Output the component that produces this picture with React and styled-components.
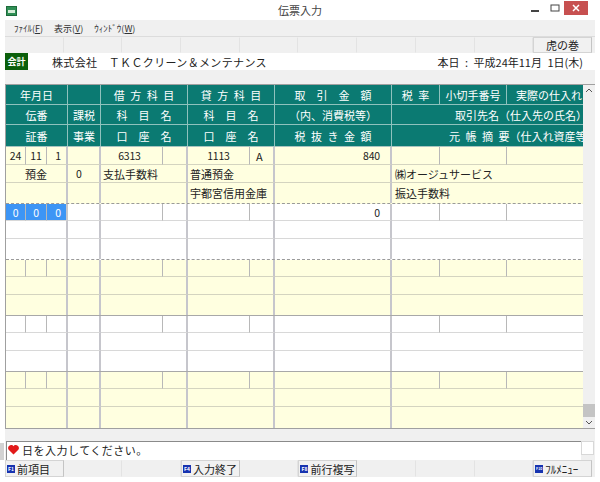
import React from 'react'
import styled, { createGlobalStyle } from 'styled-components'

const COLS = '20px 21px 21px 33px 62px 25px 62px 25px 117px 48px 67px 100px'
const FONT = `'Noto Sans CJK JP', 'Liberation Sans', sans-serif`
const EN = '\u2002'

const GlobalStyle = createGlobalStyle`
  html, body { margin: 0; padding: 0; background: #fff; }
  body { font-family: ${FONT}; color: #222; }
`

const Page = styled.div`
  width: 600px;
  height: 482px;
  overflow: hidden;
  position: relative;
  display: flex;
  flex-direction: column;
  background: #fff;
`

const EdgeShade = styled.div`
  position: absolute;
  left: 0;
  top: 443px;
  width: 4px;
  height: 17px;
  background: #d2d2d2;
`

const TitleBar = styled.div`
  height: 20px;
  position: relative;
  display: flex;
  align-items: center;
  justify-content: center;
  font-size: 11px;
  color: #444;
`

const AppIcon = styled.div`
  position: absolute;
  left: 6px;
  top: 6px;
  width: 11px;
  height: 10px;
  background: #2f8f55;
  border: 1px solid #1d6b3b;
  box-sizing: border-box;
  display: flex;
  align-items: center;
  justify-content: center;

  &::after {
    content: '';
    width: 7px;
    height: 3px;
    background: #d6ecd8;
  }
`

const WindowButtons = styled.div`
  position: absolute;
  right: 12px;
  top: 1px;
  display: flex;
  align-items: center;
`

const MinMax = styled.div`
  width: 19px;
  height: 14px;
  display: flex;
  align-items: center;
  justify-content: center;
`

const CloseBtn = styled.div`
  width: 24px;
  height: 14px;
  background: #c75050;
  display: flex;
  align-items: center;
  justify-content: center;
`

const Body = styled.div`
  margin: 0 5px;
  background: #f0f0f0;
  display: flex;
  flex-direction: column;
  height: 457px;
`

const MenuBar = styled.div`
  height: 16px;
  display: flex;
  align-items: center;
  gap: 11px;
  padding-left: 9px;
  font-size: 9px;
  color: #333;
  u { text-decoration: underline; }
`

const SlotRow = styled.div`
  height: 17px;
  display: grid;
  grid-template-columns: repeat(10, 58.7px);
  box-sizing: border-box;
  border-top: ${p => (p.$top ? '1px solid #dcdcdc' : 'none')};
`

const FuncButton = styled.div`
  box-sizing: border-box;
  background: ${p => (p.$on ? '#f1f1f1' : 'transparent')};
  border: 1px solid ${p => (p.$on ? '#d4d4d4' : 'transparent')};
  border-right-color: ${p => (p.$on ? '#c4c4c4' : '#e3e3e3')};
  display: flex;
  align-items: center;
  justify-content: ${p => (p.$center ? 'center' : 'flex-start')};
  gap: 1px;
  font-size: 11px;
  color: #222;
  white-space: nowrap;
  overflow: hidden;
`

const CompanyRow = styled.div`
  height: 17px;
  background: #fff;
  display: flex;
  align-items: center;
  font-size: 11px;
  color: #222;
`

const Badge = styled.div`
  width: 23px;
  height: 17px;
  background: #0b5f0b;
  color: #fff;
  font-weight: 700;
  font-size: 9px;
  display: flex;
  align-items: center;
  justify-content: center;
`

const CompanyName = styled.div`
  margin-left: 24px;
  letter-spacing: 0.35px;
  flex: 1;
  white-space: pre;
`

const Today = styled.div`
  padding-right: 12px;
  white-space: pre;
`

const TableArea = styled.div`
  margin-top: 14px;
  height: 345px;
  display: flex;
  border-top: 1px solid #a0a0a0;
  border-bottom: 1px solid #a0a0a0;
  border-left: 1px solid #a0a0a0;
  box-sizing: border-box;
`

const Sheet = styled.div`
  width: 577px;
  overflow: hidden;
  display: flex;
  flex-direction: column;
  flex: none;
`

const HeaderGrid = styled.div`
  display: grid;
  width: 600px;
  grid-template-columns: ${COLS};
  grid-template-rows: 20px 20px 21px;
  background: #0b7a72;
  border-bottom: 1px solid #a8c4c0;
`

const HeadCell = styled.div`
  grid-column: span ${p => p.$span || 1};
  box-sizing: border-box;
  border-right: 1px solid #8fc2bd;
  border-bottom: ${p => (p.$last ? 'none' : '1px solid #8fc2bd')};
  color: #fff;
  font-size: 11px;
  display: flex;
  align-items: center;
  justify-content: ${p => (p.$pl ? 'flex-start' : 'center')};
  white-space: pre;
  overflow: hidden;
  padding-left: ${p => p.$pl || 0}px;
`

const Block = styled.div`
  display: grid;
  width: 600px;
  grid-template-columns: ${COLS};
  grid-template-rows: ${p => p.$rows};
  background: ${p => (p.$cream ? '#ffffe0' : '#fff')};
  border-bottom: 1px ${p => (p.$dash ? 'dashed #9a9a9a' : 'solid #a8a8a8')};
`

const Cell = styled.div`
  grid-column: span ${p => p.$span || 1};
  box-sizing: border-box;
  border-right: ${p => (p.$major ? '2px solid #c6c6cc' : '1px solid #b8b8b8')};
  border-bottom: ${p => (p.$end ? 'none' : `1px solid ${p.$cream ? '#d4d4c0' : '#d8d8d8'}`)};
  font-size: 11px;
  color: #222;
  display: flex;
  align-items: center;
  justify-content: ${p => p.$align || 'flex-start'};
  padding: 0 ${p => p.$pr || 0}px 0 ${p => p.$pl || 0}px;
  white-space: pre;
  overflow: hidden;
  ${p => p.$num && 'font-size: 10.5px; letter-spacing: -0.2px;'}
  ${p => p.$selected && 'background: #3d95f5; color: #fff;'}
`

const ScrollBar = styled.div`
  width: 12px;
  background: #f0f0f0;
  display: flex;
  flex-direction: column;
  align-items: center;
  justify-content: space-between;
  flex: none;
  position: relative;
`

const ScrollArrow = styled.div`
  height: 11px;
  display: flex;
  align-items: center;
  justify-content: center;
`

const ScrollThumb = styled.div`
  position: absolute;
  left: 0;
  right: 0;
  bottom: 11px;
  height: 13px;
  background: #c4c4c4;
`

const MessageRow = styled.div`
  margin-top: 12px;
  height: 19px;
  display: flex;
  padding-left: 1px;
`

const MessageBox = styled.div`
  width: 575px;
  box-sizing: border-box;
  background: #fff;
  border-top: 1px solid #8a8a8a;
  border-left: 1px solid #8a8a8a;
  display: flex;
  align-items: center;
  gap: 3px;
  font-size: 11px;
  letter-spacing: 0.5px;
  padding: 0 0 2px 1px;
`

const MessageSide = styled.div`
  width: 13px;
  height: 14px;
  box-sizing: border-box;
  background: #fff;
  border: 1px solid #d8d8d8;
`

const KeyIcon = styled.span`
  width: 8px;
  height: 8px;
  margin: 0 1px;
  background: #1733b0;
  color: #fff;
  font-size: ${p => (p.$tiny ? 3.5 : 5)}px;
  font-weight: 700;
  line-height: 8px;
  text-align: center;
  overflow: hidden;
  flex: none;
`

const Heart = () => (
  <svg width="11" height="10" viewBox="0 0 24 24" preserveAspectRatio="none">
    <path fill="#e21a1a" d="M12 23 1.500 11.500C-2 6 2 0 7 0c2.500 0 4 1.300 5 3 1-1.700 2.500-3 5-3 5 0 9 6 5.500 11.500z" />
  </svg>
)

const FUNC_KEYS = [
  { key: 'F1', label: '前項目' },
  {},
  {},
  { key: 'F4', label: '入力終了' },
  {},
  { key: 'F8', label: '前行複写' },
  {},
  {},
  {},
  { key: 'F10', label: 'ﾌﾙﾒﾆｭｰ' }
]

const BLOCKS = [
  {
    rows: '18px 18px 20px', cream: true, dash: true,
    y: '24', m: '11', d: '1', code: '6313', kind: '1113', tag: 'A', amount: '840',
    col1: '預金', tax: '0', debit: '支払手数料', credit: '普通預金',
    partner: '㈱オージュサービス', bank: '宇都宮信用金庫', memo: '振込手数料'
  },
  { rows: '17px 18px 20px', dash: true, selected: true, y: '0', m: '0', d: '0', amount: '0' },
  { rows: '17px 18px 20px', cream: true },
  { rows: '17px 18px 20px' },
  { rows: '17px 18px 21px', cream: true }
]

const Entry = ({ b }) => {
  const c = b.cream
  return (
    <Block $cream={c} $dash={b.dash} $rows={b.rows}>
      <Cell $cream={c} $num $align="center" $selected={b.selected}>{b.y}</Cell>
      <Cell $cream={c} $num $align="center" $selected={b.selected}>{b.m}</Cell>
      <Cell $cream={c} $num $major $align="flex-end" $pr={5} $selected={b.selected}>{b.d}</Cell>
      <Cell $cream={c} $major />
      <Cell $cream={c} $num $align="center" $pr={4}>{b.code}</Cell>
      <Cell $cream={c} $major />
      <Cell $cream={c} $num $align="center">{b.kind}</Cell>
      <Cell $cream={c} $major $pl={6}>{b.tag}</Cell>
      <Cell $cream={c} $num $major $align="flex-end" $pr={10}>{b.amount}</Cell>
      <Cell $cream={c} />
      <Cell $cream={c} />
      <Cell $cream={c} />

      <Cell $cream={c} $span={3} $major $align="center">{b.col1}</Cell>
      <Cell $cream={c} $major $num $pl={8}>{b.tax}</Cell>
      <Cell $cream={c} $span={2} $major $pl={2}>{b.debit}</Cell>
      <Cell $cream={c} $span={2} $major $pl={2}>{b.credit}</Cell>
      <Cell $cream={c} $major />
      <Cell $cream={c} $span={3} $pl={3}>{b.partner}</Cell>

      <Cell $end $span={3} $major />
      <Cell $end $major />
      <Cell $end $span={2} $major />
      <Cell $end $span={2} $major $pl={2}>{b.bank}</Cell>
      <Cell $end $major />
      <Cell $end $span={3} $pl={3}>{b.memo}</Cell>
    </Block>
  )
}

export default function App() {
  return (
    <Page>
      <GlobalStyle />
      <EdgeShade />
      <TitleBar>
        <AppIcon />
        伝票入力
        <WindowButtons>
          <MinMax>
            <svg width="9" height="8" viewBox="0 0 9 8"><rect x="0" y="6" width="8" height="2" fill="#444" /></svg>
          </MinMax>
          <MinMax>
            <svg width="10" height="8" viewBox="0 0 10 8"><rect x="1" y="1" width="8" height="6" fill="none" stroke="#444" strokeWidth="1" /></svg>
          </MinMax>
          <CloseBtn>
            <svg width="8" height="8" viewBox="0 0 8 8"><path d="M1 1 7 7M7 1 1 7" stroke="#fff" strokeWidth="1.5" /></svg>
          </CloseBtn>
        </WindowButtons>
      </TitleBar>
      <Body>
        <MenuBar>
          <span>ﾌｧｲﾙ(<u>F</u>)</span>
          <span>表示(<u>V</u>)</span>
          <span>ｳｨﾝﾄﾞｳ(<u>W</u>)</span>
        </MenuBar>
        <SlotRow $top>
          {Array.from({ length: 9 }, (_, i) => <FuncButton key={i} />)}
          <FuncButton $on $center>虎の巻</FuncButton>
        </SlotRow>
        <CompanyRow>
          <Badge>会計</Badge>
          <CompanyName>株式会社　ＴＫＣクリーン＆メンテナンス</CompanyName>
          <Today>{`本日${EN}:${EN}平成24年11月${EN}1日(木)`}</Today>
        </CompanyRow>
        <TableArea>
          <Sheet>
            <HeaderGrid>
              <HeadCell $span={3}>年月日</HeadCell>
              <HeadCell />
              <HeadCell $span={2}>{`借${EN}方${EN}科${EN}目`}</HeadCell>
              <HeadCell $span={2}>{`貸${EN}方${EN}科${EN}目`}</HeadCell>
              <HeadCell>取　引　金　額</HeadCell>
              <HeadCell>{`税${EN}率`}</HeadCell>
              <HeadCell>小切手番号</HeadCell>
              <HeadCell $pl={9}>実際の仕入れ</HeadCell>

              <HeadCell $span={3}>伝番</HeadCell>
              <HeadCell>課税</HeadCell>
              <HeadCell $span={2}>科　目　名</HeadCell>
              <HeadCell $span={2}>科　目　名</HeadCell>
              <HeadCell>（内、消費税等）</HeadCell>
              <HeadCell $span={3} $pl={63}>取引先名（仕入先の氏名）</HeadCell>

              <HeadCell $span={3} $last>証番</HeadCell>
              <HeadCell $last>事業</HeadCell>
              <HeadCell $span={2} $last>口　座　名</HeadCell>
              <HeadCell $span={2} $last>口　座　名</HeadCell>
              <HeadCell $last>{`税${EN}抜${EN}き${EN}金${EN}額`}</HeadCell>
              <HeadCell $span={3} $pl={57} $last>{`元${EN}帳${EN}摘${EN}要（仕入れ資産等`}</HeadCell>
            </HeaderGrid>
            {BLOCKS.map((b, i) => <Entry key={i} b={b} />)}
          </Sheet>
          <ScrollBar>
            <ScrollArrow>
              <svg width="8" height="5" viewBox="0 0 8 5"><path d="M1 4 4 1l3 3" fill="none" stroke="#555" /></svg>
            </ScrollArrow>
            <ScrollThumb />
            <ScrollArrow>
              <svg width="8" height="5" viewBox="0 0 8 5"><path d="M1 1l3 3 3-3" fill="none" stroke="#555" /></svg>
            </ScrollArrow>
          </ScrollBar>
        </TableArea>
        <MessageRow>
          <MessageBox><Heart />日を入力してください。</MessageBox>
          <MessageSide />
        </MessageRow>
        <SlotRow>
          {FUNC_KEYS.map((k, i) => (
            <FuncButton key={i} $on={!!k.key}>
              {k.key && <KeyIcon $tiny={k.key === 'F10'}>{k.key}</KeyIcon>}
              {k.label}
            </FuncButton>
          ))}
        </SlotRow>
      </Body>
    </Page>
  )
}
